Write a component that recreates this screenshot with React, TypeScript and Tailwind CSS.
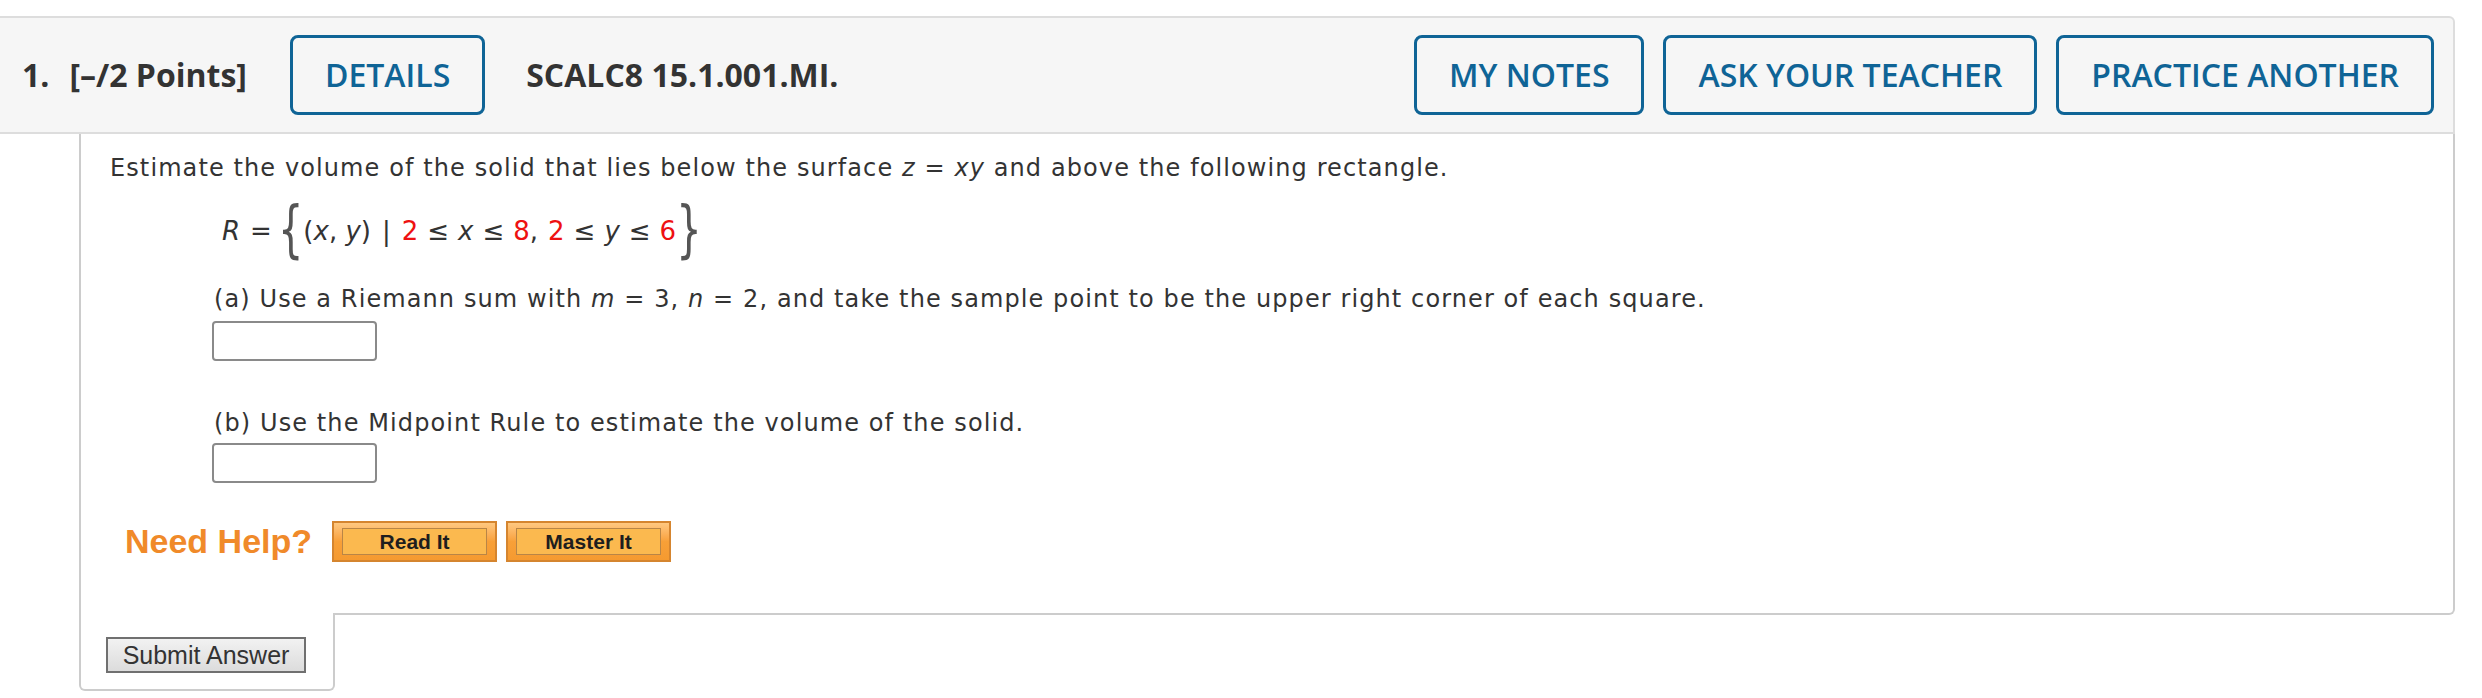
import React from 'react';

const HEAD_BTN =
  'h-[80px] px-[32px] border-[3px] border-[#0f6496] rounded-[8px] text-[32px] font-semibold text-[#0f6496] bg-transparent leading-none';
const ANSWER = 'block w-[165px] h-[40px] border-2 border-[#8a8a8a] rounded-[4px] bg-white';
const TEXT = 'text-[24px] tracking-[1.1px] leading-[32px] text-[#333]';
const BRACE = 'text-[40px] leading-none text-[#555] [font-family:\'DejaVu_Serif\',serif] -mt-[6px] scale-y-[1.55]';

const HelpButton: React.FC<{ label: string }> = ({ label }) => (
  <button className="w-[165px] h-[41px] p-[5px_8px] border-2 border-[#d5852f] bg-gradient-to-b from-[#ffc880] via-[#f8a038] to-[#f59a30]">
    <span className="flex items-center justify-center w-full h-full border-[1.5px] border-[#b98546] bg-[#fbb94f] text-[21px] font-bold text-[#1e1e1e] [font-family:'Liberation_Sans',Arial,sans-serif]">
      {label}
    </span>
  </button>
);

export default function App() {
  return (
    <div className="w-[2482px] min-h-[698px] bg-white pt-[16px] [font-family:'Open_Sans',sans-serif]">
      <div className="w-[2455px] h-[118px] flex items-center pl-[22px] pr-[19px] bg-[#f6f6f6] border-t-2 border-b-2 border-r-2 border-[#dddddd] rounded-tr-[6px]">
        <span className="text-[32px] font-bold text-[#333]">1.</span>
        <span className="ml-[20px] text-[32px] font-bold text-[#333]">[–/2 Points]</span>
        <button className={HEAD_BTN + ' ml-[43px]'}>DETAILS</button>
        <span className="ml-[41px] text-[32px] font-bold text-[#333]">SCALC8 15.1.001.MI.</span>
        <div className="flex-1" />
        <div className="flex gap-[19px]">
          <button className={HEAD_BTN}>MY NOTES</button>
          <button className={HEAD_BTN}>ASK YOUR TEACHER</button>
          <button className={HEAD_BTN}>PRACTICE ANOTHER</button>
        </div>
      </div>

      <div className="ml-[79px] w-[2376px] border-l-2 border-r-2 border-b-2 border-[#cccccc] rounded-br-[6px] pt-[18px] pb-[51px] [font-family:'DejaVu_Sans',Verdana,sans-serif]">
        <p className={TEXT + ' pl-[29px]'}>
          Estimate the volume of the solid that lies below the surface <i>z</i> = <i>xy</i> and above the following rectangle.
        </p>

        <div className="mt-[17px] h-[60px] pl-[141px] flex items-center text-[26px] text-[#333]">
          <i>R</i>
          <span className="ml-[10px] mr-[6px]">=</span>
          <span className={BRACE}>{'{'}</span>
          <span>(<i>x</i>, <i>y</i>)</span>
          <span className="mx-[11px]">|</span>
          <span className="text-[#ee1111]">2</span>
          <span className="mx-[9px]">≤</span>
          <i>x</i>
          <span className="mx-[9px]">≤</span>
          <span className="text-[#ee1111]">8</span>
          <span>,</span>
          <span className="ml-[10px] text-[#ee1111]">2</span>
          <span className="mx-[9px]">≤</span>
          <i>y</i>
          <span className="mx-[9px]">≤</span>
          <span className="text-[#ee1111]">6</span>
          <span className={BRACE}>{'}'}</span>
        </div>

        <p className={TEXT + ' mt-[22px] pl-[133px]'}>
          (a) Use a Riemann sum with <i>m</i> = 3, <i>n</i> = 2, and take the sample point to be the upper right corner of each square.
        </p>
        <div className="mt-[6px] pl-[131px]">
          <input className={ANSWER} />
        </div>

        <p className={TEXT + ' mt-[46px] pl-[133px]'}>(b) Use the Midpoint Rule to estimate the volume of the solid.</p>
        <div className="mt-[4px] pl-[131px]">
          <input className={ANSWER} />
        </div>

        <div className="mt-[38px] pl-[44px] flex items-center h-[41px] [font-family:'Liberation_Sans',Arial,sans-serif]">
          <span className="text-[34px] font-bold text-[#f08a2a] mr-[20px]">Need Help?</span>
          <HelpButton label="Read It" />
          <div className="w-[9px]" />
          <HelpButton label="Master It" />
        </div>
      </div>

      <div className="relative -mt-[2px] ml-[79px] w-[256px] bg-white border-l-2 border-r-2 border-b-2 border-[#cccccc] rounded-b-[6px] pt-[24px] pb-[16px] pl-[25px]">
        <button className="w-[200px] h-[36px] border-2 border-[#707070] bg-gradient-to-b from-[#f2f2f2] to-[#dcdcdc] text-[25px] leading-none text-[#333] [font-family:'Liberation_Sans',Arial,sans-serif]">
          Submit Answer
        </button>
      </div>
    </div>
  );
}
